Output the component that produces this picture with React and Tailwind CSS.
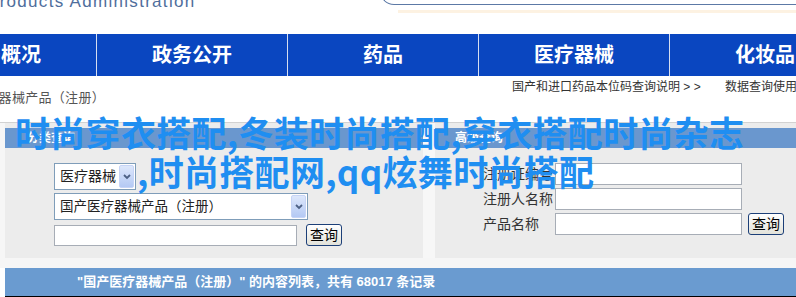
import React from 'react';

const navItems = ['本局概况', '政务公开', '药品', '医疗器械', '化妆品'];

function XpSelect({ className, children }) {
  return (
    <div className={`flex h-[27px] items-center border border-[#7f9db9] bg-white ${className}`}>
      <span className="flex-1 overflow-hidden whitespace-nowrap pl-[5px] text-[14px] text-[#222]">{children}</span>
      <span className="m-[1px] flex h-[23px] w-[15px] items-center justify-center rounded-[2px] border border-[#c6d4f6] bg-linear-to-b from-[#dde7fb] to-[#b4c9f4]">
        <svg width="8" height="6" viewBox="0 0 8 6">
          <path d="M1 1 L4 4 L7 1" stroke="#4d6185" strokeWidth="1.8" fill="none" />
        </svg>
      </span>
    </div>
  );
}

function XpButton() {
  return (
    <button className="h-[22px] w-[36px] shrink-0 rounded-[3px] border border-[#1c3f78] bg-linear-to-b from-white to-[#e2e2da] text-[14px] leading-none text-black">
      查询
    </button>
  );
}

function Field({ label }) {
  return (
    <div className="flex h-[22px] items-center">
      <span className="w-[72px] shrink-0 whitespace-nowrap text-[14px] text-[#333]">{label}</span>
      <div className="h-[22px] w-[187px] border border-[#a7adb6] bg-white" />
    </div>
  );
}

export default function App() {
  return (
    <div className="relative h-[297px] w-[796px] overflow-hidden bg-white font-['Liberation_Sans','Noto_Sans_CJK_SC',sans-serif]">
      {/* page header */}
      <header className="flex h-[34px] overflow-hidden">
        <div className="-ml-[13px] -mt-[6px] w-[393px] shrink-0 whitespace-nowrap text-[17px] leading-[16px] tracking-[1.3px] text-[#4f6e9c]">
          Products Administration
        </div>
        <div className="flex-1">
          <div className="-mt-[10px] h-[15px] rounded-bl-[14px] border-b border-l border-[#5c79a6]" />
          <div className="ml-[18px] mt-[5px] h-[3px] bg-[#fdf2e2]" />
        </div>
      </header>

      {/* main nav */}
      <nav className="-ml-[94px] flex h-[42px] bg-[#0a46c0]">
        {navItems.map((t) => (
          <div
            key={t}
            className="flex w-[191px] shrink-0 items-center justify-center border-r border-[#d6def0] text-[20px] font-bold text-white"
          >
            {t}
          </div>
        ))}
      </nav>

      {/* breadcrumb / links */}
      <div className="-ml-[28px] flex h-[46px] items-start pt-[3px] text-[12px] leading-[16px] text-[#333]">
        <div className="mt-[11px] w-[540px] shrink-0 text-[13px] tracking-[0.3px] text-[#555]">医疗器械产品（注册）</div>
        <div className="w-[213px] shrink-0 whitespace-nowrap">国产和进口药品本位码查询说明 &gt; &gt;</div>
        <div className="whitespace-nowrap">数据查询使用说明 &gt; &gt;</div>
      </div>

      {/* search panels */}
      <div className="border-t border-[#d2d2d2] bg-[#f6f6f6] pb-[10px] pl-[5px]">
        <div className="flex h-[135px]">
          <section className="w-[418px] bg-[#ececec] pt-[5px]">
            <div className="flex h-[20px] items-center bg-[#6a97ce] pl-[22px] text-[12px] font-bold text-white">分类查询</div>
            <div className="mt-[15px] flex flex-col pl-[49px]">
              <XpSelect className="w-[82px]">医疗器械</XpSelect>
              <XpSelect className="mt-[3px] w-[254px]">
                <span className="text-[13.5px]">国产医疗器械产品（注册）</span>
              </XpSelect>
              <div className="mt-[4px] flex items-center gap-[9px]">
                <div className="h-[21px] w-[243px] border border-[#a7adb6] bg-white" />
                <XpButton />
              </div>
            </div>
          </section>
          <div className="w-[12px] bg-[#f7f7f7]" />
          <section className="flex-1 bg-[#ececec] pt-[5px]">
            <div className="flex h-[20px] items-center bg-[#6a97ce] pl-[20px] text-[12px] font-bold text-white">高级查询</div>
            <div className="mt-[15px] flex flex-col gap-[3px] pl-[48px]">
              <Field label="注册证编号" />
              <Field label="注册人名称" />
              <div className="flex items-center gap-[6px]">
                <Field label="产品名称" />
                <XpButton />
              </div>
            </div>
          </section>
        </div>
      </div>

      {/* result header */}
      <div className="ml-[5px] flex h-[29px] items-center whitespace-nowrap border-b border-black bg-[#6a9bd0] pl-[72px] text-[13px] font-bold text-white">
        "国产医疗器械产品（注册）" 的内容列表，共有 68017 条记录
      </div>

      {/* watermark overlay */}
      <div className="pointer-events-none absolute left-[15px] top-[112px] whitespace-nowrap font-['Noto_Sans_CJK_SC',sans-serif] text-[35px] font-bold leading-[40px] tracking-[0.3px] text-[#1f8ef1]">
        时尚穿衣搭配,冬装时尚搭配,穿衣搭配时尚杂志
      </div>
      <div className="pointer-events-none absolute left-[137px] top-[151px] whitespace-nowrap font-['Noto_Sans_CJK_SC',sans-serif] text-[35px] font-bold leading-[40px] tracking-[0.3px] text-[#1f8ef1]">
        ,时尚搭配网,qq炫舞时尚搭配
      </div>
    </div>
  );
}
